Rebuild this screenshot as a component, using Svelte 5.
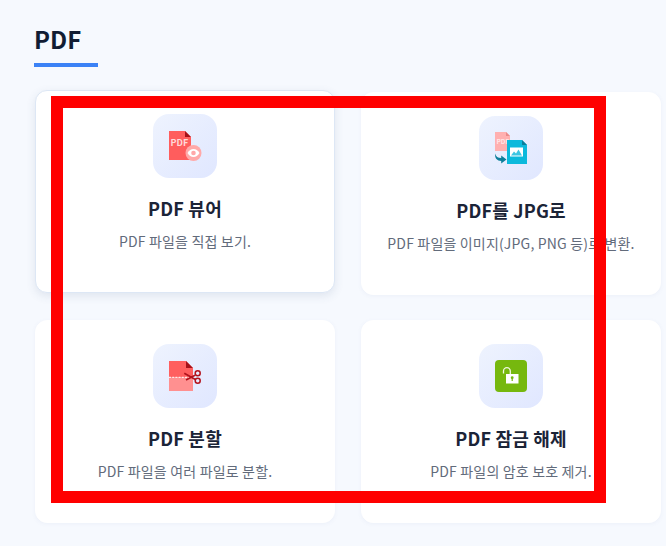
<script>
  const font = '"Noto Sans CJK KR", sans-serif';
</script>

<main class="page">
  <h2 class="title">PDF</h2>
  <div class="grid">
    <article class="card hovered">
      <div class="tile">
        <svg viewBox="0 0 32 32" width="32" height="32" aria-hidden="true">
          <path d="M0 1h16l6 6v23H0z" fill="#ff5d5d" />
          <path d="M16 1l6 6h-6z" fill="#a5121a" />
          <text x="1.600" y="16" font-size="9" font-weight="700" fill="#ffd9d9" font-family={font}>PDF</text>
          <circle cx="24.500" cy="23" r="8" fill="#ffa9a9" />
          <path d="M18.500 23c1.600-2.800 3.600-4 6-4s4.400 1.200 6 4c-1.600 2.800-3.600 4-6 4s-4.400-1.200-6-4z" fill="#fff" />
          <circle cx="24.500" cy="23" r="2.300" fill="#ffa9a9" />
        </svg>
      </div>
      <h3>PDF 뷰어</h3>
      <p>PDF 파일을 직접 보기.</p>
    </article>

    <article class="card">
      <div class="tile">
        <svg viewBox="0 0 32 32" width="32" height="32" aria-hidden="true">
          <path d="M0 0h11l4 4v15H0z" fill="#ffb0b0" />
          <path d="M11 0l4 4h-4z" fill="#e98a8a" />
          <text x="1.500" y="11.500" font-size="6.500" font-weight="700" fill="#ffe6e6" font-family={font}>PDF</text>
          <path d="M12 8h15l5 5v19H12z" fill="#0cb9dc" />
          <path d="M27 8l5 5h-5z" fill="#0a7f9c" />
          <rect x="15" y="15.500" width="13" height="9" fill="#fff" />
          <path d="M16 23.500l3-4 2 2 2.500-4 3.500 6z" fill="#3cc5e2" />
          <path d="M0.200 21.500c.5 3 2.800 4.500 6 4.500V23.500l5.300 4-5.300 4v-2.500c-4 0-6.700-2.800-6-7.500z" fill="#0e7f9b" />
        </svg>
      </div>
      <h3>PDF를 JPG로</h3>
      <p>PDF 파일을 이미지(JPG, PNG 등)로 변환.</p>
    </article>

    <article class="card">
      <div class="tile">
        <svg viewBox="0 0 32 32" width="32" height="32" aria-hidden="true">
          <path d="M0 1h17l7 7v9H0z" fill="#ff5f5f" />
          <path d="M0 17h24v14H0z" fill="#ff9090" />
          <path d="M17 1l7 7h-7z" fill="#a5121a" />
          <path d="M0 17.300h23" stroke="#fff" stroke-width="1" stroke-dasharray="2 1.200" />
          <path d="M15.300 13.200l11 6.300M17 20l9-4.800" stroke="#b3121c" stroke-width="1.600" fill="none" />
          <circle cx="28.700" cy="13.300" r="2.500" fill="none" stroke="#b3121c" stroke-width="1.500" />
          <circle cx="28.700" cy="20.700" r="2.500" fill="none" stroke="#b3121c" stroke-width="1.500" />
        </svg>
      </div>
      <h3>PDF 분할</h3>
      <p>PDF 파일을 여러 파일로 분할.</p>
    </article>

    <article class="card">
      <div class="tile">
        <svg viewBox="0 0 32 32" width="32" height="32" aria-hidden="true">
          <rect width="32" height="32" rx="4" fill="#76b80e" />
          <path d="M8.500 13.500v-2.500a3.400 3.400 0 0 1 6.800 0v3.500" fill="none" stroke="#f0f8e0" stroke-width="1.300" />
          <rect x="11" y="14" width="12.500" height="9.500" fill="#fff" />
          <circle cx="17.200" cy="17.700" r="1.400" fill="#76b80e" />
          <rect x="16.600" y="18" width="1.200" height="3" fill="#76b80e" />
        </svg>
      </div>
      <h3>PDF 잠금 해제</h3>
      <p>PDF 파일의 암호 보호 제거.</p>
    </article>
  </div>
  <div class="marker"></div>
</main>

<style>
  :global(body) {
    margin: 0;
    background: #f6f9fe;
  }
  .page {
    position: relative;
    width: 666px;
    height: 546px;
    overflow: hidden;
    box-sizing: border-box;
    padding: 21px 0 0 35px;
    font-family: "Noto Sans CJK KR", sans-serif;
  }
  .title {
    margin: 0 0 25px -1px;
    width: 64px;
    height: 46px;
    box-sizing: border-box;
    border-bottom: 4px solid #3b82f6;
    font-size: 24px;
    line-height: 36px;
    font-weight: 700;
    color: #111c33;
  }
  .grid {
    display: grid;
    grid-template-columns: 300px 300px;
    grid-auto-rows: 203px;
    column-gap: 26px;
    row-gap: 25px;
  }
  .card {
    box-sizing: border-box;
    background: #fff;
    border: 1px solid #fff;
    border-radius: 12px;
    padding-top: 23px;
    text-align: center;
    box-shadow: 0 1px 4px rgba(80, 110, 170, 0.06);
  }
  .hovered {
    transform: translateY(-2px);
    border-color: #dde7f5;
    box-shadow: 0 3px 10px rgba(60, 80, 120, 0.12);
  }
  .tile {
    width: 64px;
    height: 64px;
    margin: 0 auto;
    display: flex;
    align-items: center;
    justify-content: center;
    border-radius: 16px;
    background: linear-gradient(135deg, #eef3fe, #e0e7ff);
  }
  svg {
    display: block;
    overflow: visible;
  }
  h3 {
    margin: 17px 0 0;
    font-size: 18px;
    line-height: 26px;
    font-weight: 700;
    letter-spacing: 0.2px;
    color: #1b2437;
  }
  p {
    margin: 10px 0 0;
    font-size: 14px;
    line-height: 21px;
    letter-spacing: 0.17px;
    color: #626b7b;
  }
  .marker {
    position: absolute;
    left: 51px;
    top: 96px;
    width: 555px;
    height: 407px;
    box-sizing: border-box;
    border: 12px solid #ff0000;
    pointer-events: none;
  }
</style>
